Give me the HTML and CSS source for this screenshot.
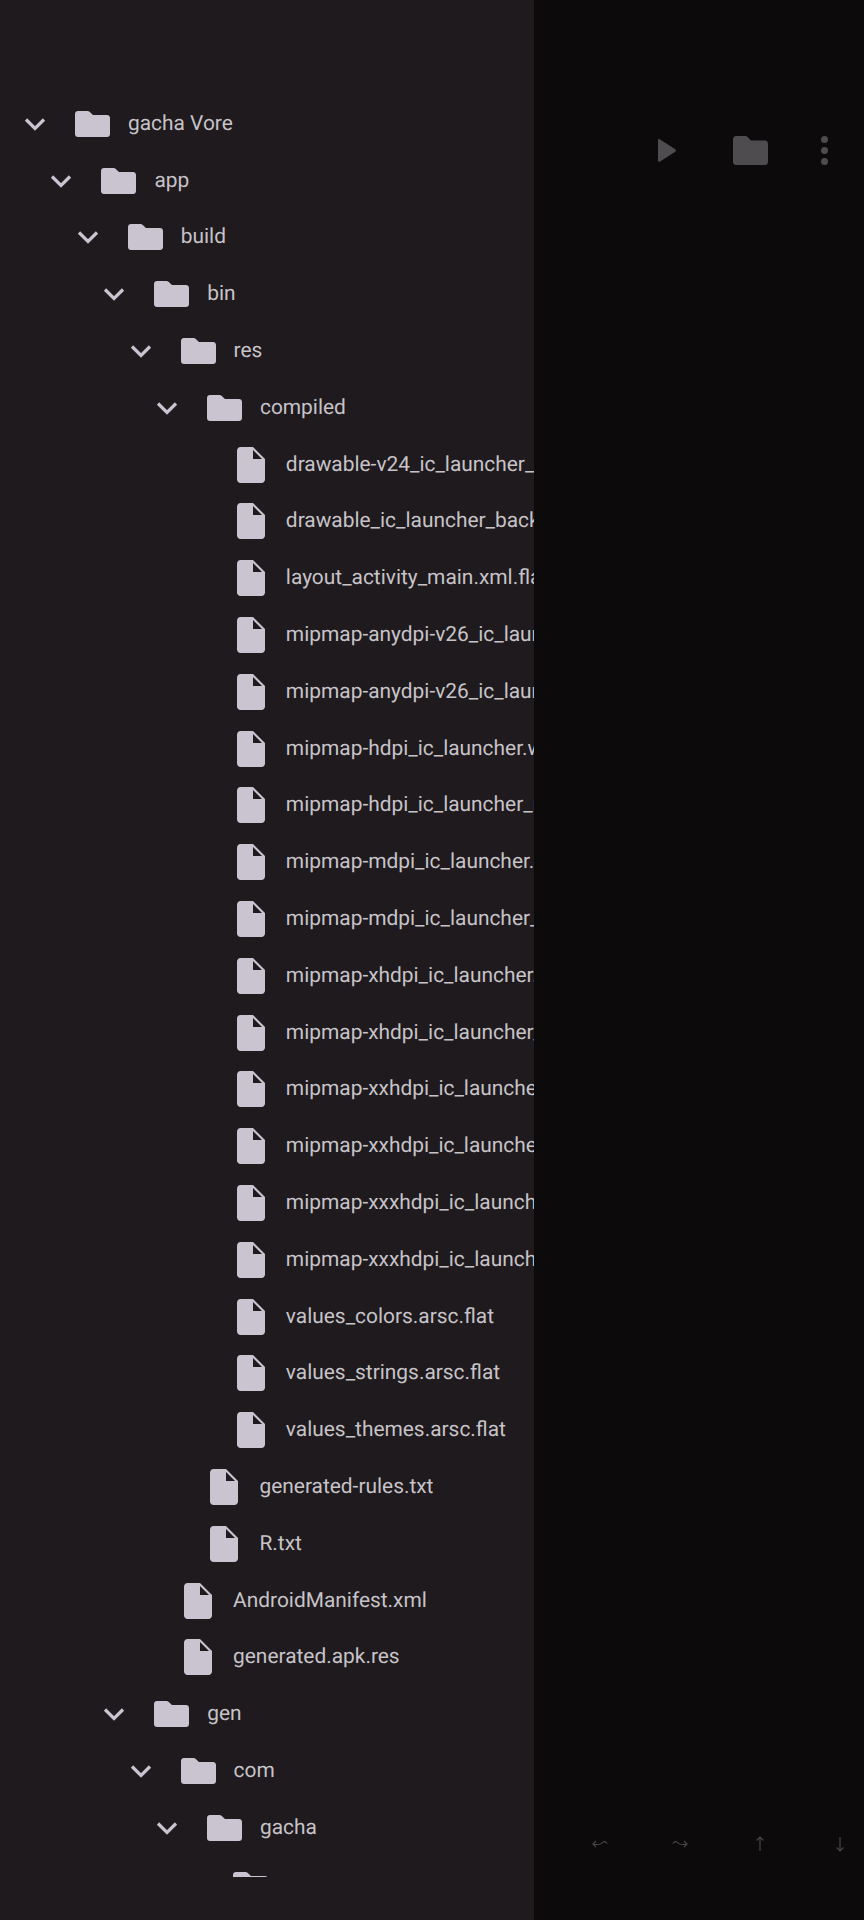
FILE: index.html
```html
<!DOCTYPE html>
<html lang="en">
<head>
  <meta charset="UTF-8" />
  <meta name="viewport" content="width=device-width, initial-scale=1" />
  <title>Files</title>
  <link rel="stylesheet" href="styles.css">
</head>
<body>
  <svg class="defs" width="0" height="0">
    <symbol id="chevron" viewBox="0 0 22 14">
      <path d="M2 2.500l9 9 9-9" fill="none" stroke="currentColor" stroke-width="3.200" />
    </symbol>
    <symbol id="folder" viewBox="0 0 35 26">
      <path d="M3 0h9.500c.8 0 1.500.3 2 .8L18 4h14c1.700 0 3 1.300 3 3v16c0 1.700-1.300 3-3 3H3c-1.700 0-3-1.300-3-3V3c0-1.700 1.300-3 3-3z" fill="currentColor" />
    </symbol>
    <symbol id="file" viewBox="0 0 28 36">
      <path d="M3.500 0H16l12 12v20.500c0 1.900-1.600 3.500-3.500 3.500h-21C1.600 36 0 34.400 0 32.500v-29C0 1.600 1.600 0 3.500 0z" fill="currentColor" />
      <path d="M16 3v9h9z" fill="#1e1a1d" />
    </symbol>
  </svg>

  <aside class="sidebar">
    <ul class="tree">
      <li>
        <div class="row"><svg class="chevron"><use href="#chevron" /></svg><svg class="ic-folder"><use href="#folder" /></svg><span>gacha Vore</span></div>
        <ul>
          <li>
            <div class="row"><svg class="chevron"><use href="#chevron" /></svg><svg class="ic-folder"><use href="#folder" /></svg><span>app</span></div>
            <ul>
              <li>
                <div class="row"><svg class="chevron"><use href="#chevron" /></svg><svg class="ic-folder"><use href="#folder" /></svg><span>build</span></div>
                <ul>
                  <li>
                    <div class="row"><svg class="chevron"><use href="#chevron" /></svg><svg class="ic-folder"><use href="#folder" /></svg><span>bin</span></div>
                    <ul>
                      <li>
                        <div class="row"><svg class="chevron"><use href="#chevron" /></svg><svg class="ic-folder"><use href="#folder" /></svg><span>res</span></div>
                        <ul>
                          <li>
                            <div class="row"><svg class="chevron"><use href="#chevron" /></svg><svg class="ic-folder"><use href="#folder" /></svg><span>compiled</span></div>
                            <ul>
                              <li class="row file"><svg class="ic-file"><use href="#file" /></svg><span>drawable-v24_ic_launcher_foreground.xml.flat</span></li>
                              <li class="row file"><svg class="ic-file"><use href="#file" /></svg><span>drawable_ic_launcher_background.xml.flat</span></li>
                              <li class="row file"><svg class="ic-file"><use href="#file" /></svg><span>layout_activity_main.xml.flat</span></li>
                              <li class="row file"><svg class="ic-file"><use href="#file" /></svg><span>mipmap-anydpi-v26_ic_launcher.xml.flat</span></li>
                              <li class="row file"><svg class="ic-file"><use href="#file" /></svg><span>mipmap-anydpi-v26_ic_launcher_round.xml.flat</span></li>
                              <li class="row file"><svg class="ic-file"><use href="#file" /></svg><span>mipmap-hdpi_ic_launcher.webp.flat</span></li>
                              <li class="row file"><svg class="ic-file"><use href="#file" /></svg><span>mipmap-hdpi_ic_launcher_round.webp.flat</span></li>
                              <li class="row file"><svg class="ic-file"><use href="#file" /></svg><span>mipmap-mdpi_ic_launcher.webp.flat</span></li>
                              <li class="row file"><svg class="ic-file"><use href="#file" /></svg><span>mipmap-mdpi_ic_launcher_round.webp.flat</span></li>
                              <li class="row file"><svg class="ic-file"><use href="#file" /></svg><span>mipmap-xhdpi_ic_launcher.webp.flat</span></li>
                              <li class="row file"><svg class="ic-file"><use href="#file" /></svg><span>mipmap-xhdpi_ic_launcher_round.webp.flat</span></li>
                              <li class="row file"><svg class="ic-file"><use href="#file" /></svg><span>mipmap-xxhdpi_ic_launcher.webp.flat</span></li>
                              <li class="row file"><svg class="ic-file"><use href="#file" /></svg><span>mipmap-xxhdpi_ic_launcher_round.webp.flat</span></li>
                              <li class="row file"><svg class="ic-file"><use href="#file" /></svg><span>mipmap-xxxhdpi_ic_launcher.webp.flat</span></li>
                              <li class="row file"><svg class="ic-file"><use href="#file" /></svg><span>mipmap-xxxhdpi_ic_launcher_round.webp.flat</span></li>
                              <li class="row file"><svg class="ic-file"><use href="#file" /></svg><span>values_colors.arsc.flat</span></li>
                              <li class="row file"><svg class="ic-file"><use href="#file" /></svg><span>values_strings.arsc.flat</span></li>
                              <li class="row file"><svg class="ic-file"><use href="#file" /></svg><span>values_themes.arsc.flat</span></li>
                            </ul>
                          </li>
                          <li class="row file"><svg class="ic-file"><use href="#file" /></svg><span>generated-rules.txt</span></li>
                          <li class="row file"><svg class="ic-file"><use href="#file" /></svg><span>R.txt</span></li>
                        </ul>
                      </li>
                      <li class="row file"><svg class="ic-file"><use href="#file" /></svg><span>AndroidManifest.xml</span></li>
                      <li class="row file"><svg class="ic-file"><use href="#file" /></svg><span>generated.apk.res</span></li>
                    </ul>
                  </li>
                  <li>
                    <div class="row"><svg class="chevron"><use href="#chevron" /></svg><svg class="ic-folder"><use href="#folder" /></svg><span>gen</span></div>
                    <ul>
                      <li>
                        <div class="row"><svg class="chevron"><use href="#chevron" /></svg><svg class="ic-folder"><use href="#folder" /></svg><span>com</span></div>
                        <ul>
                          <li>
                            <div class="row"><svg class="chevron"><use href="#chevron" /></svg><svg class="ic-folder"><use href="#folder" /></svg><span>gacha</span></div>
                            <ul>
                              <li>
                                <div class="row"><svg class="chevron"><use href="#chevron" /></svg><svg class="ic-folder"><use href="#folder" /></svg><span>vore</span></div>
                              </li>
                            </ul>
                          </li>
                        </ul>
                      </li>
                    </ul>
                  </li>
                </ul>
              </li>
            </ul>
          </li>
        </ul>
      </li>
    </ul>
  </aside>

  <main class="editor">
    <div class="toolbar">
      <svg class="tool-play" viewBox="0 0 18 23"><path d="M0 1.500C0 .3 1.200-.3 2.100.4L17.300 10.300c.9.600.9 1.900 0 2.500L2.100 22.600C1.200 23.300 0 22.700 0 21.500z" fill="currentColor" /></svg>
      <svg class="tool-folder" viewBox="0 0 35 26" preserveAspectRatio="none"><use href="#folder" /></svg>
      <div class="tool-more"><i></i><i></i><i></i></div>
    </div>
    <div class="keys">
      <svg viewBox="0 0 16 10"><path d="M15 4.500C13.500 2 11.500 2 10 4S6 6 1 5M4 2L1 5l3 3" /></svg>
      <svg viewBox="0 0 16 10"><path d="M1 4.500C2.500 2 4.500 2 6 4s4 2 9 1M12 2l3 3-3 3" /></svg>
      <svg viewBox="0 0 16 16"><path d="M8 15V1M4.500 4.500L8 1l3.500 3.500" /></svg>
      <svg viewBox="0 0 16 16"><path d="M8 1v14M4.500 11.500L8 15l3.500-3.500" /></svg>
    </div>
  </main>
</body>
</html>
```

FILE: styles.css
```css
* {
  box-sizing: border-box;
}

body {
  margin: 0;
  width: 864px;
  height: 1920px;
  display: flex;
  overflow: hidden;
  background: #0c0a0b;
  font-family: Roboto, sans-serif;
  text-rendering: geometricPrecision;
}

.defs {
  display: block;
  flex: none;
}

/* arvore de arquivos */
.sidebar {
  width: 534px;
  height: 1920px;
  flex: none;
  background: #1e1a1d;
  padding-top: 95.5px;
  overflow: hidden;
}

ul {
  list-style: none;
  margin: 0;
  padding: 0 0 0 26.4px;
}

.tree {
  height: 1781.5px;
  overflow: hidden;
  padding-left: 0;
}

.row {
  height: 56.8px;
  display: flex;
  align-items: center;
  white-space: nowrap;
  padding-left: 24px;
  color: #c7c3c8;
  font-size: 20.9px;
}

.chevron {
  width: 22px;
  height: 14px;
  flex: none;
  color: #cac4d0;
  margin-right: 29px;
}

.ic-folder {
  width: 35px;
  height: 26px;
  flex: none;
  color: #cac4d0;
  margin-right: 18px;
}

.file {
  padding-left: 78.5px;
}

.ic-file {
  width: 28px;
  height: 36px;
  flex: none;
  color: #cac4d0;
  margin-right: 21px;
}

.editor {
  flex: 1;
  display: flex;
  flex-direction: column;
  justify-content: space-between;
  color: #4f4c50;
}

.toolbar {
  display: flex;
  align-items: center;
  padding: 136px 0 0 124px;
}

.tool-play {
  width: 18px;
  height: 23px;
  color: #4f4c50;
  margin-right: 57px;
}

.tool-folder {
  width: 35px;
  height: 29px;
  color: #4f4c50;
  margin-right: 53px;
}

.tool-more {
  display: flex;
  flex-direction: column;
  gap: 4px;
}

.tool-more i {
  display: block;
  width: 7px;
  height: 7px;
  border-radius: 50%;
  background: #4f4c50;
}

.keys {
  display: flex;
  align-items: center;
  gap: 64px;
  padding: 0 0 68px 58px;
}

.keys svg {
  width: 16px;
  height: 16px;
  fill: none;
  stroke: #464646;
  stroke-width: 1.2;
}
```
